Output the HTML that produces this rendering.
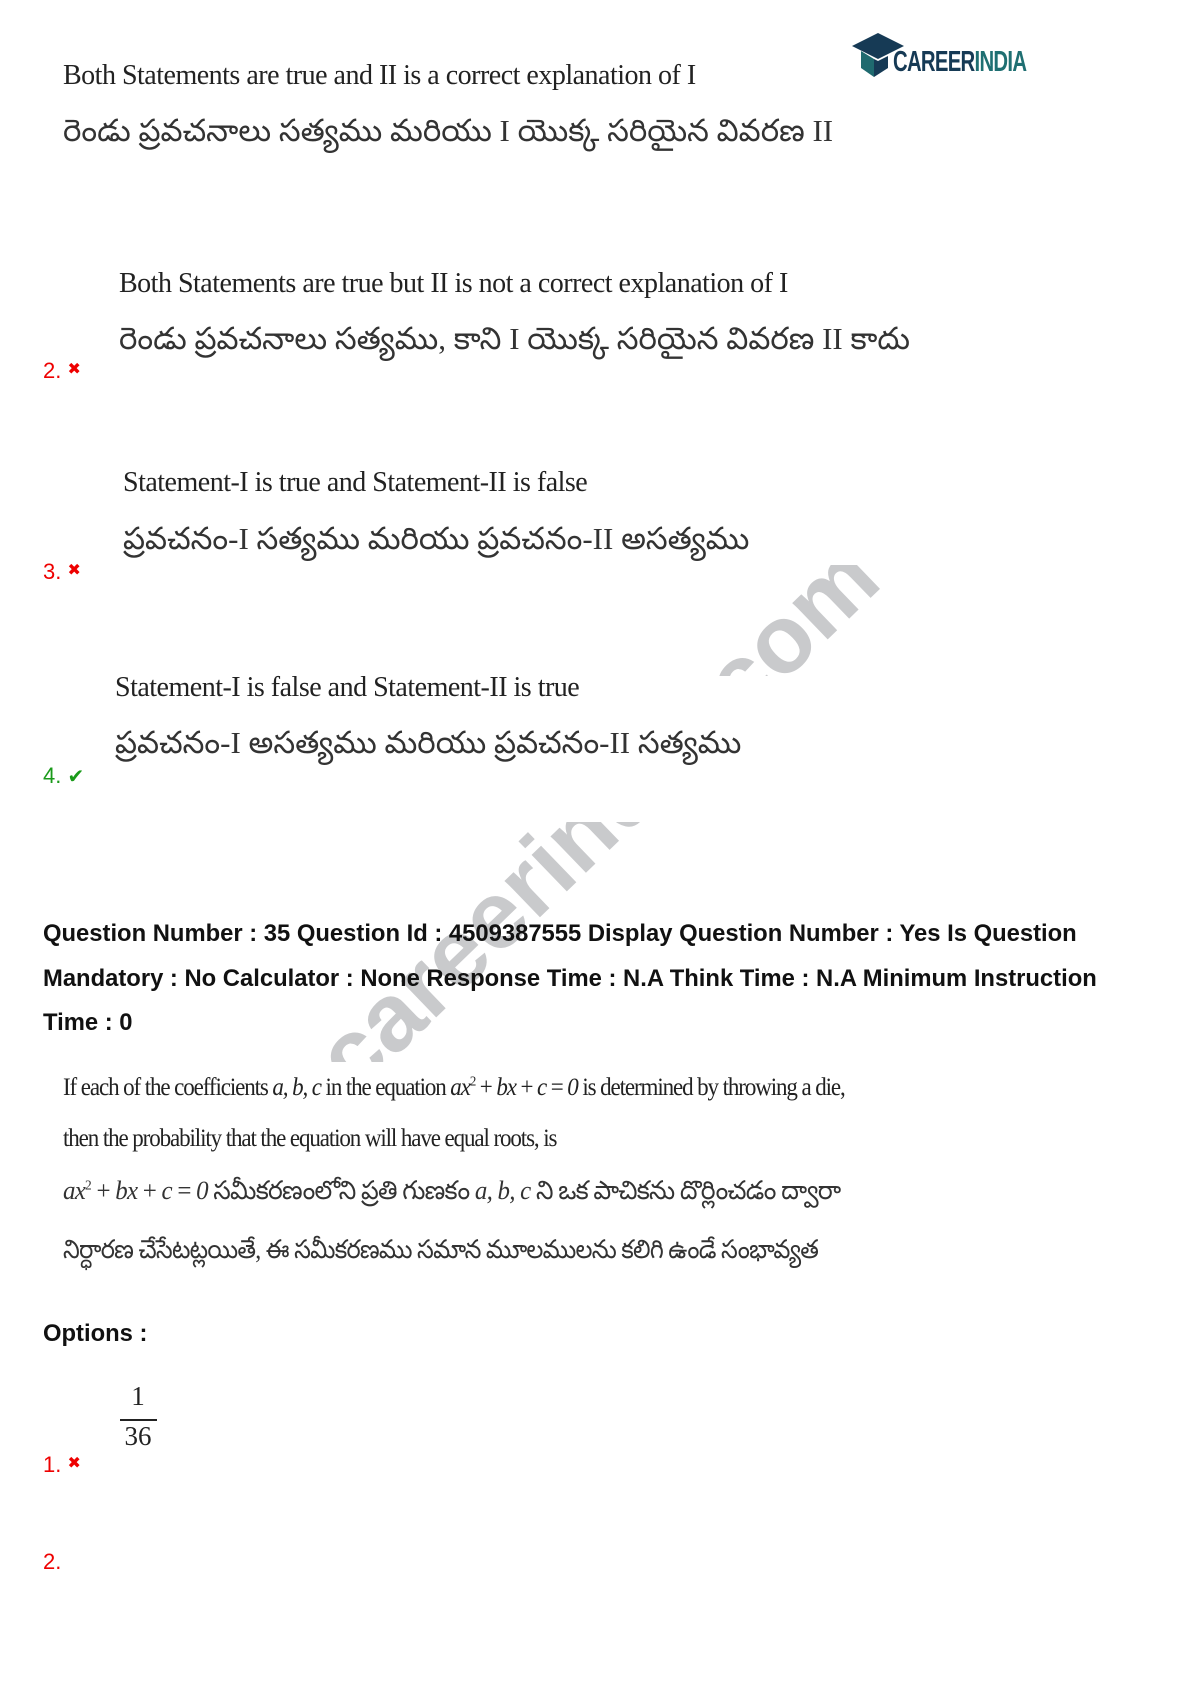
<!DOCTYPE html>
<html><head><meta charset="utf-8">
<style>
html,body{margin:0;padding:0;background:#fff;}
body{width:1191px;height:1684px;position:relative;overflow:hidden;}
.a{position:absolute;white-space:nowrap;}
.s{font-family:"Liberation Serif",serif;color:#222;font-size:28px;letter-spacing:-0.5px;background:#fff;}
.t{font-family:"Liberation Serif","Noto Sans CJK SC",serif;color:#333;font-size:31px;background:#fff;}
.q{font-family:"Liberation Sans",sans-serif;font-weight:bold;font-size:23.8px;color:#111;}
.r{font-family:"Liberation Sans",sans-serif;font-size:22px;color:#e00;}
.g{font-family:"Liberation Sans",sans-serif;font-size:22px;color:#1a9a1a;}
.wm{position:absolute;left:365px;top:1012px;line-height:95px;font-family:"Liberation Sans",sans-serif;font-weight:bold;font-size:96px;color:#c9cacc;transform:rotate(-44deg);transform-origin:0 100%;white-space:nowrap;}
.box{position:absolute;background:#fff;}
i{font-style:italic;}
.sq{transform-origin:left top;}
</style></head><body>
<div class="wm">careerindia.com</div>

<div class="box" style="left:100px;top:676px;width:810px;height:146px"></div>
<div class="box" style="left:55px;top:1062px;width:830px;height:240px"></div>
<div class="box" style="left:100px;top:455px;width:760px;height:110px"></div>

<!-- logo -->
<svg class="a" style="left:852px;top:32px" width="60" height="45" viewBox="0 0 60 45">
<polygon points="0,14 26,1 52,14 26,27" fill="#163a55"/>
<polygon points="9,19 9,36 22,45 22,27" fill="#1f6a6f"/>
<polygon points="22,27 22,45 36,36 36,24 26,29" fill="#163a55"/>
</svg>
<div class="a" style="left:893px;top:46px;font-family:'Liberation Sans',sans-serif;font-weight:bold;font-size:29px;letter-spacing:-1px;transform:scaleX(0.7);transform-origin:left top;"><span style="color:#163a55">CAREER</span><span style="color:#1f6f72">INDIA</span></div>

<div class="a s" style="left:63px;top:60px">Both Statements are true and II is a correct explanation of I</div>
<div class="a t" style="left:63px;top:113px">రెండు ప్రవచనాలు సత్యము మరియు I యొక్క సరియైన వివరణ II</div>

<div class="a s" style="left:119px;top:268px">Both Statements are true but II is not a correct explanation of I</div>
<div class="a t" style="left:119px;top:321px">రెండు ప్రవచనాలు సత్యము, కాని I యొక్క సరియైన వివరణ II కాదు</div>
<div class="a r" style="left:43px;top:358px">2. <span style="font-size:16px;vertical-align:4px">✖</span></div>

<div class="a s" style="left:123px;top:467px">Statement-I is true and Statement-II is false</div>
<div class="a t" style="left:123px;top:521px">ప్రవచనం-I సత్యము మరియు ప్రవచనం-II అసత్యము</div>
<div class="a r" style="left:43px;top:559px">3. <span style="font-size:16px;vertical-align:4px">✖</span></div>

<div class="a s" style="left:115px;top:672px">Statement-I is false and Statement-II is true</div>
<div class="a t" style="left:115px;top:725px">ప్రవచనం-I అసత్యము మరియు ప్రవచనం-II సత్యము</div>
<div class="a g" style="left:43px;top:763px">4. <span style="font-size:20px">✔</span></div>

<div class="a q" style="left:43px;top:920px">Question Number : 35 Question Id : 4509387555 Display Question Number : Yes Is Question</div>
<div class="a q" style="left:43px;top:965px">Mandatory : No Calculator : None Response Time : N.A Think Time : N.A Minimum Instruction</div>
<div class="a q" style="left:43px;top:1009px">Time : 0</div>

<div class="a s sq" style="left:63px;top:1074px;font-size:25px;letter-spacing:-1.2px;transform:scaleX(0.92)">If each of the coefficients <i>a, b, c</i> in the equation <i>ax</i><sup style="font-size:14px">2</sup> + <i>bx</i> + <i>c</i> = <i>0</i> is determined by throwing a die,</div>
<div class="a s sq" style="left:63px;top:1125px;font-size:25px;letter-spacing:-1.2px;transform:scaleX(0.92)">then the probability that the equation will have equal roots, is</div>
<div class="a t sq" style="left:63px;top:1176px;font-size:26px;letter-spacing:-0.8px;transform:scaleX(0.96)"><i>ax</i><sup style="font-size:14px">2</sup> + <i>bx</i> + <i>c</i> = <i>0</i> సమీకరణంలోని ప్రతి గుణకం <i>a, b, c</i> ని ఒక పాచికను దొర్లించడం ద్వారా</div>
<div class="a t sq" style="left:63px;top:1235px;font-size:26px;letter-spacing:-0.8px;transform:scaleX(0.92)">నిర్ధారణ చేసేటట్లయితే, ఈ సమీకరణము సమాన మూలములను కలిగి ఉండే సంభావ్యత</div>

<div class="a q" style="left:43px;top:1320px">Options :</div>

<div class="a" style="left:119px;top:1381px;font-family:'Liberation Serif',serif;font-size:27px;color:#222;text-align:center;width:38px;">1</div>
<div class="a" style="left:120px;top:1419px;width:37px;height:2px;background:#222"></div>
<div class="a" style="left:119px;top:1421px;font-family:'Liberation Serif',serif;font-size:27px;color:#222;text-align:center;width:38px;">36</div>
<div class="a r" style="left:43px;top:1452px">1. <span style="font-size:16px;vertical-align:4px">✖</span></div>

<div class="a r" style="left:43px;top:1549px">2.</div>
</body></html>
